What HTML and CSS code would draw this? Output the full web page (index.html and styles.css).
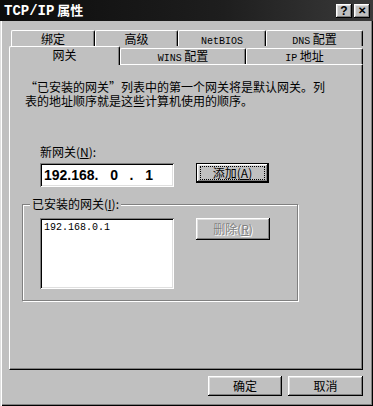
FILE: index.html
```html
<!DOCTYPE html>
<html lang="zh-CN">
<head>
    <meta charset="UTF-8">
    <title>TCP/IP 属性</title>
    <link rel="stylesheet" href="styles.css">
</head>
<body>

<div class="window">
    <div class="titlebar">
        <span class="title"><span class="en">TCP/IP</span> 属性</span>
        <div class="title-buttons">
            <span class="tbtn">?</span>
            <span class="tbtn close">&#x2715;</span>
        </div>
    </div>

    <div class="tabs">
        <div class="tab-row back">
            <div class="tab w1">绑定</div>
            <div class="tab w2">高级</div>
            <div class="tab w3"><span class="en">NetBIOS</span></div>
            <div class="tab w4"><span class="en">DNS</span> 配置</div>
        </div>
        <div class="tab-row front">
            <div class="tab active w5">网关</div>
            <div class="tab w6"><span class="en">WINS</span> 配置</div>
            <div class="tab w7"><span class="en">IP</span> 地址</div>
        </div>
    </div>

    <div class="panel">
        <div class="intro">
            <div class="line">“已安装的网关”列表中的第一个网关将是默认网关。列</div>
            <div class="line">表的地址顺序就是这些计算机使用的顺序。</div>
        </div>

        <div class="field-label">新网关(<u>N</u>):</div>
        <div class="field-row">
            <div class="textbox">192.168.   0   .   1</div>
            <button class="btn default"><span class="focus">添加(<u>A</u>)</span></button>
        </div>

        <fieldset class="group">
            <legend>已安装的网关(<u>I</u>):</legend>
            <div class="field-row">
                <div class="listbox"><div class="item">192.168.0.1</div></div>
                <button class="btn disabled">删除(<u>R</u>)</button>
            </div>
        </fieldset>
    </div>

    <div class="footer">
        <button class="btn ok">确定</button>
        <button class="btn cancel">取消</button>
    </div>
</div>

</body>
</html>
```

FILE: styles.css
```css
/* Old Windows dialog look */
body {
    margin: 0;
    background-color: #c0c0c0;
    font-family: "Noto Sans CJK SC", "Liberation Sans", sans-serif;
    font-size: 12px;
    color: #000;
}
.window {
    width: 373px;
    height: 406px;
    box-sizing: border-box;
    background-color: #c0c0c0;
    box-shadow: inset 1px 0 #dfdfdf, inset 2px 0 #fff, inset -1px -1px #000, inset -2px -2px #808080;
    overflow: hidden;
}
.en {
    font-family: "Liberation Mono", monospace;
    font-size: 10px;
}
.titlebar {
    height: 21px;
    background: linear-gradient(to right, #0c0c0c, #1e1e1e 60%, #3a3a3a);
    display: flex;
    align-items: center;
    justify-content: space-between;
    padding: 0 3px 0 4px;
}
.title {
    color: #fff;
    font-weight: bold;
    font-size: 13px;
    line-height: 21px;
}
.title .en {
    font-size: 14px;
    font-weight: bold;
}
.title-buttons {
    display: flex;
    gap: 2px;
}
.tbtn {
    width: 16px;
    height: 14px;
    box-sizing: border-box;
    background-color: #c0c0c0;
    box-shadow: inset -1px -1px #000, inset 1px 1px #fff, inset -2px -2px #808080, inset 2px 2px #dfdfdf;
    font-family: "Liberation Sans", sans-serif;
    font-weight: bold;
    font-size: 12px;
    line-height: 14px;
    text-align: center;
}
.tbtn.close {
    font-size: 10px;
}

/* tabs */
.tabs {
    margin-top: 10px;
    padding-left: 9px;
}
.tab-row {
    display: flex;
    align-items: flex-end;
}
.tab-row.back {
    margin-left: 2px;
    height: 15px;
}
.tab-row.front {
    height: 18px;
}
.tab {
    box-sizing: border-box;
    height: 16px;
    border-top: 1px solid #fff;
    border-left: 1px solid #fff;
    border-right: 1px solid #000;
    border-radius: 2px 2px 0 0;
    box-shadow: inset -1px 0 #808080;
    text-align: center;
    line-height: 15px;
    background-color: #c0c0c0;
}
.tab-row.front .tab {
    line-height: 14px;
}
.tab-row.front .tab.active {
    height: 19px;
    line-height: 15px;
    margin-bottom: -1px;
    position: relative;
    z-index: 1;
}
.w1 { width: 84px; }
.w2 { width: 83px; }
.w3 { width: 88px; }
.w4 { width: 97px; }
.w5 { width: 111px; }
.w6 { width: 126px; }
.w7 { width: 117px; }

/* panel */
.panel {
    margin-left: 9px;
    width: 354px;
    height: 306px;
    box-sizing: border-box;
    border-top: 1px solid #fff;
    border-left: 1px solid #fff;
    border-right: 1px solid #000;
    border-bottom: 1px solid #000;
    box-shadow: inset -1px -1px #808080;
}
.intro {
    margin: 15px 0 0 15px;
}
.intro .line {
    height: 14px;
    line-height: 14px;
}
.field-label {
    margin: 37px 0 0 30px;
    line-height: 14px;
}
.field-row {
    display: flex;
    align-items: flex-start;
    gap: 22px;
}
.panel > .field-row {
    margin: 4px 0 0 30px;
}
.textbox {
    width: 134px;
    height: 24px;
    box-sizing: border-box;
    background-color: #fff;
    box-shadow: inset 1px 1px #808080, inset -1px -1px #fff, inset 2px 2px #000, inset -2px -2px #dfdfdf;
    font-family: "Liberation Sans", sans-serif;
    font-weight: bold;
    font-size: 14px;
    line-height: 24px;
    padding-left: 4px;
    white-space: pre;
}
.btn {
    box-sizing: border-box;
    height: 20px;
    padding: 0;
    border: none;
    background-color: #c0c0c0;
    box-shadow: inset -1px -1px #000, inset 1px 1px #fff, inset -2px -2px #808080, inset 2px 2px #dfdfdf;
    font-family: "Noto Sans CJK SC", sans-serif;
    font-size: 12px;
    line-height: 16px;
    color: #000;
}
.btn.default {
    width: 73px;
    border: 1px solid #000;
    display: flex;
    align-items: center;
    justify-content: center;
}
.btn .focus {
    display: block;
    width: 63px;
    height: 12px;
    line-height: 12px;
    outline: 1px dotted #000;
}
.btn.disabled {
    width: 74px;
    height: 22px;
    color: #808080;
    text-shadow: 1px 1px #fff;
}

/* group box */
.group {
    margin: 10px 0 0 12px;
    width: 276px;
    height: 104px;
    box-sizing: border-box;
    padding: 7px 0 0 0;
    border: 1px solid #808080;
    box-shadow: inset 1px 1px #fff, 1px 1px #fff;
}
.group legend {
    margin-left: 7px;
    padding: 0 2px;
    line-height: 14px;
    background-color: #c0c0c0;
}
.group .field-row {
    margin-left: 17px;
}
.listbox {
    width: 134px;
    height: 71px;
    box-sizing: border-box;
    background-color: #fff;
    box-shadow: inset 1px 1px #808080, inset -1px -1px #fff, inset 2px 2px #000, inset -2px -2px #dfdfdf;
    padding: 3px 4px;
}
.item {
    font-family: "Liberation Mono", monospace;
    font-size: 10px;
    line-height: 14px;
}

/* bottom buttons */
.footer {
    display: flex;
    justify-content: flex-end;
    gap: 6px;
    width: 363px;
    margin-top: 6px;
}
.btn.ok { width: 74px; }
.btn.cancel { width: 75px; }
```
